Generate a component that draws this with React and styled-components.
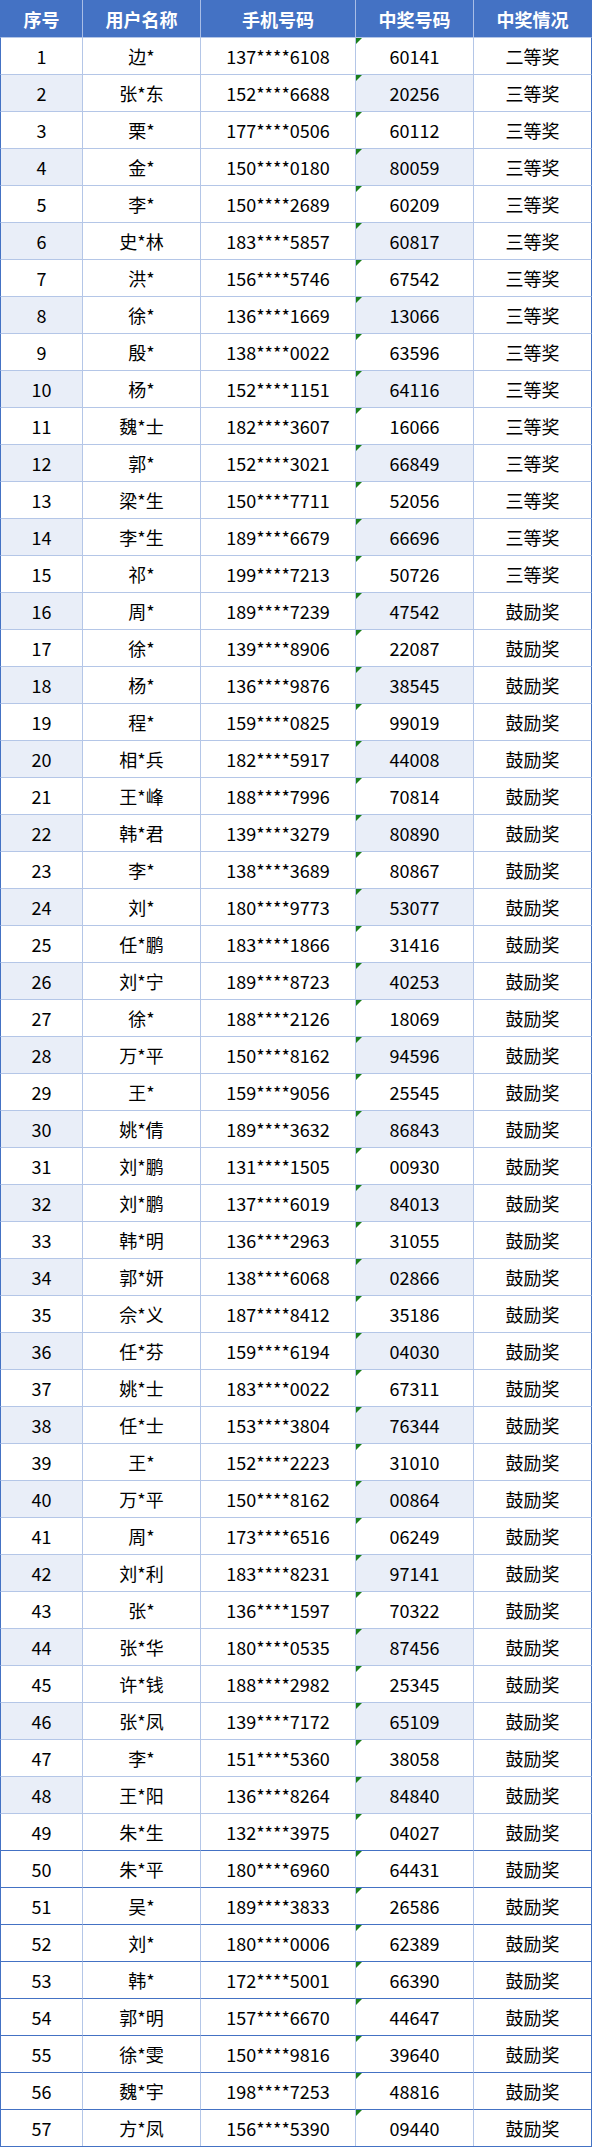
import styled, { createGlobalStyle } from "styled-components"

const GlobalStyle = createGlobalStyle`
    html, body {
        margin:0;
        padding:0;
        background:#ffffff;
    }
    body {
        font-family:"Noto Sans CJK SC", "Noto Sans", sans-serif;
    }
`

const dark = "#4472c4"
const light = "#b4c6e7"
const shade = "#e9eef8"

const rows = [
    ["边*", "137****6108", "60141", "二等奖"],
    ["张*东", "152****6688", "20256", "三等奖"],
    ["栗*", "177****0506", "60112", "三等奖"],
    ["金*", "150****0180", "80059", "三等奖"],
    ["李*", "150****2689", "60209", "三等奖"],
    ["史*林", "183****5857", "60817", "三等奖"],
    ["洪*", "156****5746", "67542", "三等奖"],
    ["徐*", "136****1669", "13066", "三等奖"],
    ["殷*", "138****0022", "63596", "三等奖"],
    ["杨*", "152****1151", "64116", "三等奖"],
    ["魏*士", "182****3607", "16066", "三等奖"],
    ["郭*", "152****3021", "66849", "三等奖"],
    ["梁*生", "150****7711", "52056", "三等奖"],
    ["李*生", "189****6679", "66696", "三等奖"],
    ["祁*", "199****7213", "50726", "三等奖"],
    ["周*", "189****7239", "47542", "鼓励奖"],
    ["徐*", "139****8906", "22087", "鼓励奖"],
    ["杨*", "136****9876", "38545", "鼓励奖"],
    ["程*", "159****0825", "99019", "鼓励奖"],
    ["相*兵", "182****5917", "44008", "鼓励奖"],
    ["王*峰", "188****7996", "70814", "鼓励奖"],
    ["韩*君", "139****3279", "80890", "鼓励奖"],
    ["李*", "138****3689", "80867", "鼓励奖"],
    ["刘*", "180****9773", "53077", "鼓励奖"],
    ["任*鹏", "183****1866", "31416", "鼓励奖"],
    ["刘*宁", "189****8723", "40253", "鼓励奖"],
    ["徐*", "188****2126", "18069", "鼓励奖"],
    ["万*平", "150****8162", "94596", "鼓励奖"],
    ["王*", "159****9056", "25545", "鼓励奖"],
    ["姚*倩", "189****3632", "86843", "鼓励奖"],
    ["刘*鹏", "131****1505", "00930", "鼓励奖"],
    ["刘*鹏", "137****6019", "84013", "鼓励奖"],
    ["韩*明", "136****2963", "31055", "鼓励奖"],
    ["郭*妍", "138****6068", "02866", "鼓励奖"],
    ["佘*义", "187****8412", "35186", "鼓励奖"],
    ["任*芬", "159****6194", "04030", "鼓励奖"],
    ["姚*士", "183****0022", "67311", "鼓励奖"],
    ["任*士", "153****3804", "76344", "鼓励奖"],
    ["王*", "152****2223", "31010", "鼓励奖"],
    ["万*平", "150****8162", "00864", "鼓励奖"],
    ["周*", "173****6516", "06249", "鼓励奖"],
    ["刘*利", "183****8231", "97141", "鼓励奖"],
    ["张*", "136****1597", "70322", "鼓励奖"],
    ["张*华", "180****0535", "87456", "鼓励奖"],
    ["许*钱", "188****2982", "25345", "鼓励奖"],
    ["张*凤", "139****7172", "65109", "鼓励奖"],
    ["李*", "151****5360", "38058", "鼓励奖"],
    ["王*阳", "136****8264", "84840", "鼓励奖"],
    ["朱*生", "132****3975", "04027", "鼓励奖"],
    ["朱*平", "180****6960", "64431", "鼓励奖"],
    ["吴*", "189****3833", "26586", "鼓励奖"],
    ["刘*", "180****0006", "62389", "鼓励奖"],
    ["韩*", "172****5001", "66390", "鼓励奖"],
    ["郭*明", "157****6670", "44647", "鼓励奖"],
    ["徐*雯", "150****9816", "39640", "鼓励奖"],
    ["魏*宇", "198****7253", "48816", "鼓励奖"],
    ["方*凤", "156****5390", "09440", "鼓励奖"],
]

const headers = ["序号", "用户名称", "手机号码", "中奖号码", "中奖情况"]

const Sheet = styled.div`
    width:592px;
    display:grid;
    grid-template-columns:82px 118px 155px 118px 119px;
    border-bottom:1px solid ${dark};
`
const HeadCell = styled.div`
    box-sizing:border-box;
    height:37px;
    display:flex;
    align-items:center;
    justify-content:center;
    background:${dark};
    color:#ffffff;
    font-size:18px;
    font-weight:bold;
    border-left:1px solid ${props => props.$first ? dark : "#a9bde6"};
    border-right:${props => props.$last ? `1px solid ${dark}` : "0"};
`
const Cell = styled.div`
    position:relative;
    box-sizing:border-box;
    height:37px;
    display:flex;
    align-items:center;
    justify-content:center;
    font-size:18px;
    color:#000000;
    background:${props => props.$shaded ? shade : "#ffffff"};
    border-top:1px solid ${props => props.$strong ? dark : light};
    border-left:1px solid ${props => props.$first ? dark : light};
    border-right:${props => props.$last ? `1px solid ${dark}` : "0"};
`
// little green corner excel puts on numbers stored as text
const Flag = styled.span`
    position:absolute;
    left:0;
    top:0;
    width:0;
    height:0;
    border-top:6px solid #1a7f1a;
    border-right:6px solid transparent;
`

export default function App()
{
    return(
        <>
            <GlobalStyle/>
            <Sheet>
                {headers.map((h, i) => (
                    <HeadCell key={h} $first={i === 0} $last={i === headers.length - 1}>{h}</HeadCell>
                ))}
                {rows.map((r, i) => {
                    const n = i + 1
                    const shaded = n % 2 === 0 && n <= 48
                    const strong = n >= 50
                    return [
                        <Cell key={n + "a"} $first $shaded={shaded} $strong={strong}>{n}</Cell>,
                        <Cell key={n + "b"} $strong={strong}>{r[0]}</Cell>,
                        <Cell key={n + "c"} $strong={strong}>{r[1]}</Cell>,
                        <Cell key={n + "d"} $shaded={shaded} $strong={strong}><Flag/>{r[2]}</Cell>,
                        <Cell key={n + "e"} $last $strong={strong}>{r[3]}</Cell>,
                    ]
                })}
            </Sheet>
        </>
    )
}
